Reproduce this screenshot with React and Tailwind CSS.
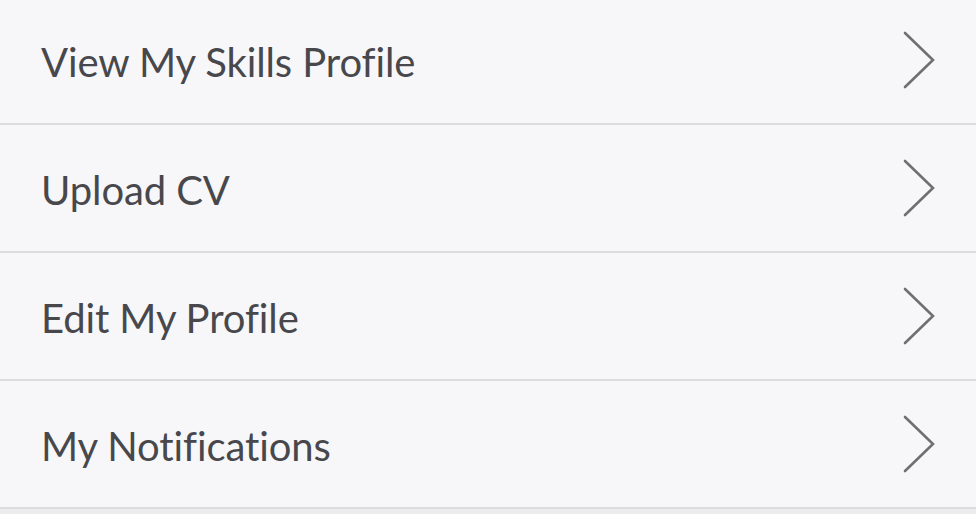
import React from "react";

const items = ["View My Skills Profile", "Upload CV", "Edit My Profile", "My Notifications"];

const Chevron = () => (
  <svg width="34" height="58" viewBox="0 0 34 58" fill="none" className="shrink-0">
    <path d="M3 2 L31 29 L3 56" stroke="#707070" strokeWidth="2.6" strokeLinecap="round" strokeLinejoin="miter" />
  </svg>
);

export default function App() {
  return (
    <div className="w-[976px] h-[514px] bg-[#ececee] overflow-hidden" style={{ fontFamily: "Lato, 'Open Sans', sans-serif" }}>
      <div className="-mt-[3px] bg-[#f7f7f9]">
        {items.map((label) => (
          <div key={label} className="h-[128px] flex items-center justify-between pl-[41px] pr-[40px] border-b-2 border-[#dcdcdf]">
            <span className="text-[40px] text-[#48484c] tracking-[-0.1px] pt-[3px]">{label}</span>
            <Chevron />
          </div>
        ))}
      </div>
    </div>
  );
}
